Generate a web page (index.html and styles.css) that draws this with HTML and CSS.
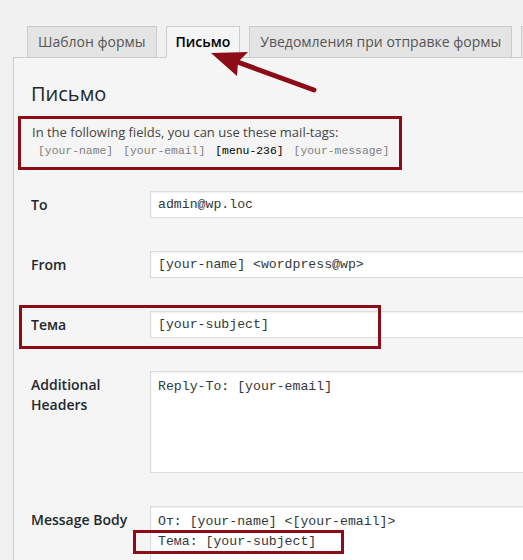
FILE: index.html
```html
<!DOCTYPE html>
<html lang="ru">
<head>
<meta charset="utf-8">
<title>Письмо</title>
<link rel="stylesheet" href="styles.css">
</head>
<body>
<div class="wrap">
  <nav class="tabs">
    <span class="tab">Шаблон формы</span>
    <span class="tab active">Письмо</span>
    <span class="tab">Уведомления при отправке формы</span>
    <span class="tab">Дополнительные настройки</span>
  </nav>
  <section class="panel">
    <h2 class="title">Письмо</h2>
    <div class="info">
      <p class="info-text">In the following fields, you can use these mail-tags:</p>
      <p class="tags"><span class="tag">[your-name]</span><span class="tag">[your-email]</span><span class="tag used">[menu-236]</span><span class="tag">[your-message]</span></p>
    </div>
    <div class="row">
      <label class="label">To</label>
      <input class="field" type="text" value="admin@wp.loc">
    </div>
    <div class="row">
      <label class="label">From</label>
      <input class="field" type="text" value="[your-name] <wordpress@wp>">
    </div>
    <div class="row">
      <label class="label">Тема</label>
      <input class="field" type="text" value="[your-subject]">
      <span class="mark mark-subject"></span>
    </div>
    <div class="row">
      <label class="label">Additional Headers</label>
      <textarea class="area area-headers">Reply-To: [your-email]</textarea>
    </div>
    <div class="row">
      <label class="label">Message Body</label>
      <textarea class="area area-body">От: [your-name] &lt;[your-email]&gt;
Тема: [your-subject]</textarea>
      <span class="mark mark-body"></span>
    </div>
  </section>
  <svg class="arrow" width="523" height="120" viewBox="0 0 523 120" aria-hidden="true">
    <line x1="314" y1="90" x2="232" y2="60" stroke="#8c0d17" stroke-width="5" stroke-linecap="round"/>
    <polygon points="211,53 248,52 238,62 237,76" fill="#8c0d17"/>
  </svg>
</div>
</body>
</html>
```
FILE: styles.css
```css
html, body {
  margin: 0;
  padding: 0;
}
body {
  background: #f1f1f1;
  font-family: "Open Sans", "Noto Sans", sans-serif;
  color: #23282d;
  overflow: hidden;
  width: 523px;
  height: 560px;
}
.wrap {
  position: relative;
  padding: 26px 0 0 13px;
}
.tabs {
  display: flex;
  gap: 9px;
  padding-left: 14px;
  white-space: nowrap;
  position: relative;
  z-index: 1;
}
.tab {
  flex: none;
  display: block;
  height: 30px;
  line-height: 30px;
  padding: 0 10px;
  font-size: 14px;
  color: #555;
  background: #e4e4e4;
  border: 1px solid #ccc;
  margin-bottom: -1px;
}
.tab.active {
  background: #f5f5f5;
  color: #000;
  font-weight: 600;
  padding: 0 9px;
  border-bottom-color: #f5f5f5;
}
.panel {
  width: 640px;
  background: #f5f5f5;
  border: 1px solid #ccc;
  border-right: none;
  padding: 23px 0 40px 17px;
}
.title {
  margin: 0;
  font-size: 20px;
  font-weight: 400;
  line-height: 26px;
  color: #23282d;
}
.info {
  margin: 9px 0 21px -13px;
  border: 3px solid #8c0d17;
  padding: 4px 0 6px 11px;
  box-sizing: content-box;
  width: 367px;
}
.info-text {
  margin: 0;
  font-size: 13px;
  line-height: 19px;
  color: #444;
}
.tags {
  margin: 0 0 0 6px;
  display: flex;
  gap: 10px;
  line-height: 19px;
}
.tag {
  font-family: "Liberation Mono", "DejaVu Sans Mono", monospace;
  font-size: 11.4px;
  color: #808080;
}
.tag.used {
  color: #000;
}
.row {
  position: relative;
  display: flex;
  align-items: flex-start;
  margin-bottom: 33px;
}
.label {
  flex: none;
  width: 119px;
  padding-top: 4px;
  font-size: 14px;
  font-weight: 600;
  line-height: 20px;
  color: #23282d;
}
.field,
.area {
  flex: none;
  box-sizing: border-box;
  width: 420px;
  margin: 0;
  background: #fff;
  border: 1px solid #ddd;
  box-shadow: inset 0 1px 2px rgba(0, 0, 0, 0.07);
  font-family: "Liberation Mono", "DejaVu Sans Mono", monospace;
  font-size: 13.2px;
  color: #32373c;
  outline: none;
  border-radius: 0;
}
.field {
  height: 27px;
  padding: 0 7px;
  line-height: 25px;
}
.area {
  resize: none;
  overflow: hidden;
  padding: 5px 7px;
  line-height: 19.5px;
}
.area-headers {
  height: 102px;
}
.area-body {
  height: 120px;
}
.mark {
  position: absolute;
  border: 3px solid #8c0d17;
  box-sizing: border-box;
  pointer-events: none;
}
.mark-subject {
  left: -12px;
  top: -6px;
  width: 362px;
  height: 44px;
}
.mark-body {
  left: 102px;
  top: 24px;
  width: 211px;
  height: 24px;
}
.arrow {
  position: absolute;
  left: 0;
  top: 0;
  pointer-events: none;
  z-index: 2;
}
```
